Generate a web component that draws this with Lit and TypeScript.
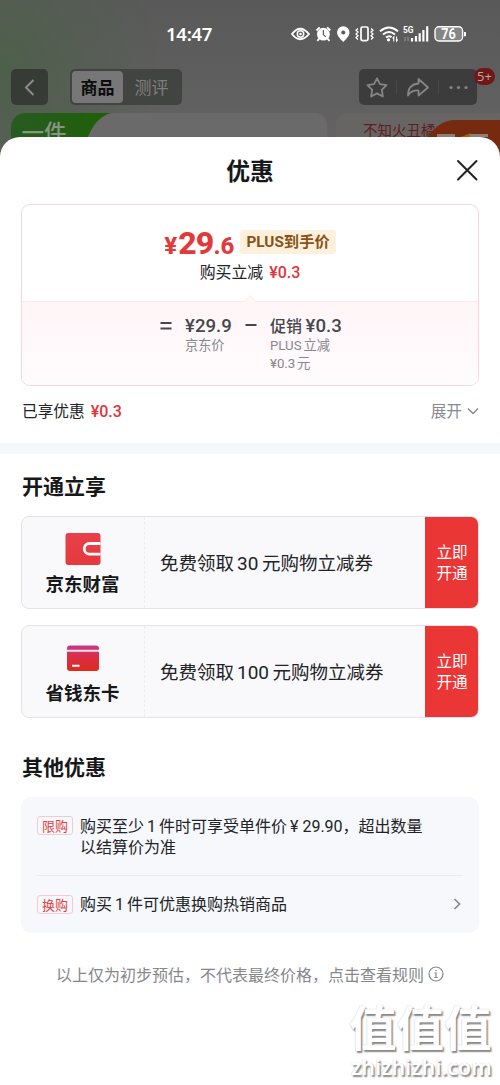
import { LitElement, html, css, svg } from "lit";
import { customElement } from "lit/decorators.js";

const font = css`"Noto Sans CJK SC", "Noto Sans", sans-serif`;

@customElement("status-bar")
class StatusBar extends LitElement {
  static styles = css`
    :host { display: flex; height: 26px; padding: 21px 33px 0 166px; justify-content: space-between; align-items: center; color: #fff; font-family: "Noto Sans", sans-serif; }
    .time { font-size: 18.500px; font-weight: 600; line-height: 26px; letter-spacing: -0.250px; }
    svg { display: block; }
    .net { font: 700 9px "Roboto", sans-serif; }
    .bat { font: 700 14px "Roboto", sans-serif; }
  `;
  render() {
    return html`
      <span class="time">14:47</span>
      <svg width="176" height="20" viewBox="291 24 176 20" fill="none" stroke="#fff">
        <path d="M292 34q8-10.500 17 0q-9 10.500-17 0z" stroke-width="1.900"/>
        <circle cx="300.500" cy="34" r="3.200" stroke-width="1.500"/><circle cx="300.500" cy="34" r="1.300" fill="#fff" stroke="none"/>
        <circle cx="323.400" cy="34.200" r="6.400" fill="#fff" stroke="none"/>
        <path d="M316.500 30.500l3.200-3.200M330.300 30.500l-3.200-3.200M319.300 38.500l-2 2.300M327.500 38.500l2 2.300" stroke-width="1.900"/>
        <path d="M323.400 30v4.600l2.300 2.300" stroke="#5b5b5b" stroke-width="1.200"/>
        <path d="M343.300 42c-3-3.200-6.200-6-6.200-9.500a6.200 6.200 0 0 1 12.400 0c0 3.500-3.200 6.300-6.200 9.500z" fill="#fff" stroke="none"/>
        <circle cx="343.300" cy="32.400" r="2" fill="#5b5b5b" stroke="none"/>
        <rect x="361" y="27" width="7" height="13.600" rx="1.500" stroke-width="1.700"/>
        <path d="M358 28.500l-2 1.800 2 1.800-2 1.900 2 1.800-2 1.800 2 1.800M371 28.500l2 1.800-2 1.800 2 1.900-2 1.800 2 1.800-2 1.800" stroke-width="1.300"/>
        <path d="M380 31.300q9-7.600 18 0M383 34.500q6-5 12 0M386 37.600q3-2.500 5.500-.5" stroke-width="2"/>
        <circle cx="388.500" cy="39.800" r="1.600" fill="#fff" stroke="none"/>
        <path d="M393.800 41.500v-4.500l-1.200 1.400M396.600 36.600v4.500l1.200-1.400" stroke-width="1.100"/>
        <text class="net" x="403" y="33.300" fill="#fff" stroke="none" textLength="10.500" lengthAdjust="spacingAndGlyphs">5G</text>
        <path d="M405 37v4M408 37v4" stroke="#999" stroke-width="1"/>
        <path d="M412 38v3.500M416 36v5.500M419.700 33.200v8.300M423.400 30v11.500M427.200 26.200v15.300" stroke-width="2.200"/>
        <rect x="435" y="26.800" width="27.600" height="14.200" rx="4" stroke-width="1.400" fill="#858585"/>
        <path d="M465 32v4.200" stroke-width="2"/>
        <text class="bat" x="441.300" y="39" fill="#fff" stroke="none" textLength="14.500" lengthAdjust="spacingAndGlyphs">76</text>
      </svg>
    `;
  }
}

@customElement("shop-backdrop")
class ShopBackdrop extends LitElement {
  static styles = css`
    :host { display: block; height: 160px; overflow: hidden; font-family: ${font};
      background: radial-gradient(ellipse 170px 180px at 0 70px, #4d6049 0, rgba(82,94,80,.65) 50%, rgba(91,91,91,0) 100%), linear-gradient(#595959, #616060 65%, #666364); }
    .nav { display: flex; align-items: center; height: 36px; padding: 22px 23px 0 11px; }
    .back { width: 37px; height: 36px; border-radius: 5px; background: #373b36; }
    .tabs { display: flex; box-sizing: border-box; width: 112px; height: 36px; margin-left: 22px; padding: 2px; border-radius: 5px; background: #424441; font-size: 17px; line-height: 31px; text-align: center; color: #7e7e7e; }
    .active { width: 51px; height: 32px; border-radius: 4px; background: #767776; color: #0c0c0c; font-weight: 700; }
    .idle { flex: 1; }
    .tools { position: relative; width: 118px; height: 36px; margin-left: auto; border-radius: 5px; background: #3c3c3c; }
    .badge { position: absolute; left: 115px; top: -1px; width: 21px; height: 17px; border-radius: 9px; background: #721616; color: #aaa; font: 13px/17px "Noto Sans", sans-serif; text-align: center; }
    svg { display: block; }
    .cards { display: flex; gap: 9px; padding: 8px 0 0 11px; }
    .left { width: 316px; height: 50px; border-radius: 14px 12px 0 0; background: #6b6a6a; overflow: hidden; }
    .right { position: relative; flex: 1; height: 50px; border-radius: 12px 0 0 0; background: #676464; color: #611c1c; font-size: 14.500px; line-height: 33px; padding-left: 27px; overflow: hidden; white-space: nowrap; }
    .promo { position: absolute; right: 0; top: 7px; }
    .deal { font-size: 22.500px; font-weight: 500; }
  `;
  render() {
    return html`
      <status-bar></status-bar>
      <div class="nav">
        <div class="back"><svg width="37" height="36" fill="none" stroke="#8b8b8b" stroke-width="2"><path d="M22.500 11l-7.500 7.500 7.500 7.500"/></svg></div>
        <div class="tabs"><div class="active">商品</div><div class="idle">测评</div></div>
        <div class="tools">
          <svg width="118" height="36" fill="none" stroke="#858585" stroke-width="1.800" stroke-linejoin="round">
            <path d="M18 9.300l3 5.900 6.500 1-4.700 4.700 1.100 6.600-5.900-3.100-5.900 3.100 1.100-6.600-4.700-4.700 6.500-1z"/>
            <path d="M59.500 10l9.500 8.500-9.500 8v-5c-5-.3-8 1.200-10.500 5 0-7.200 3.800-11.500 10.500-12z"/>
            <path d="M37.500 11v14M79.500 11v14" stroke="#484848" stroke-width="1"/>
            <g fill="#858585" stroke="none"><circle cx="92" cy="18.500" r="1.600"/><circle cx="99.500" cy="18.500" r="1.600"/><circle cx="107" cy="18.500" r="1.600"/></g>
          </svg>
          <span class="badge">5+</span>
        </div>
      </div>
      <div class="cards">
        <div class="left">
          <svg width="130" height="50"><defs><linearGradient id="leaf"><stop stop-color="#275b20"/><stop offset="1" stop-color="#206008"/></linearGradient></defs><path d="M0 0h101q-17 3-26 29v21H0z" fill="url(#leaf)"/><text class="deal" x="10.500" y="28" fill="#879485">一件</text></svg>
        </div>
        <div class="right">不知火丑橘
          <svg class="promo" width="72" height="45"><path d="M0 16Q12 0 27 0h45v45H0z" fill="#762b10"/><path d="M9 14h18v3H9zM40 14h20v3H40z" fill="#8c8179"/><path d="M30 18l13-5-3 6z" fill="#a06713"/></svg>
        </div>
      </div>
    `;
  }
}

const wallet = svg`<svg width="36" height="34" viewBox="0 0 36 34"><defs><linearGradient id="w" x2="0" y2="1"><stop stop-color="#e8404c"/><stop offset="1" stop-color="#e43a3c"/></linearGradient></defs><rect x=".5" y="1" width="35" height="32" rx="3" fill="url(#w)"/><path d="M35.500 11.500H24.500a5.300 5.300 0 0 0 0 10.600h11" fill="none" stroke="#fff" stroke-width="2.800"/></svg>`;
const bankCard = svg`<svg width="36" height="34" viewBox="0 0 36 34"><defs><linearGradient id="b" x2="0" y2="1"><stop stop-color="#c43b88"/><stop offset=".35" stop-color="#d92f50"/><stop offset="1" stop-color="#df2b1b"/></linearGradient></defs><rect x="2" y="4.500" width="32" height="25.500" rx="3" fill="url(#b)"/><path d="M2 9.800h32" stroke="#f6e3ef" stroke-width="2"/><path d="M7 24.800h7.500" stroke="#fff" stroke-width="2"/></svg>`;

@customElement("open-offer")
class OpenOffer extends LitElement {
  static properties = { name: {}, amount: {}, icon: { attribute: false } };
  declare name: string;
  declare amount: string;
  declare icon: unknown;
  static styles = css`
    :host { display: flex; box-sizing: border-box; height: 93px; border: 1px solid #e2e3e8; border-radius: 8px; background: #f9f9fc; overflow: hidden; }
    .brand { box-sizing: border-box; width: 123px; padding-top: 15px; border-right: 1px dashed #ecedf1; display: flex; flex-direction: column; align-items: center; font-size: 18.500px; line-height: 24px; font-weight: 700; color: #17181a; }
    .brand span { margin-left: -1px; }
    svg { display: block; margin-bottom: 5px; }
    .text { flex: 1; padding-left: 15px; font-size: 18.500px; line-height: 91px; white-space: nowrap; }
    .num { margin: 0 3.500px 0 3px; font: 19px/1 "Roboto", sans-serif; }
    .act { box-sizing: border-box; width: 54px; margin: -1px; padding-bottom: 1px; background: #eb3636; color: #fff; display: flex; flex-direction: column; justify-content: center; text-align: center; font-size: 15.600px; line-height: 21px; }
  `;
  render() {
    return html`
      <div class="brand">${this.icon}<span>${this.name}</span></div>
      <div class="text">免费领取<span class="num">${this.amount}</span>元购物立减券</div>
      <div class="act"><span>立即</span><span>开通</span></div>
    `;
  }
}

@customElement("app-root")
class AppRoot extends LitElement {
  static styles = css`
    :host { display: block; position: relative; width: 500px; height: 1085px; overflow: hidden; background: #fff; color: #222326; font-family: ${font}; }
    .sheet { position: relative; box-sizing: border-box; height: 948px; margin-top: -23px; border-radius: 20px 20px 0 0; background: #fff; }
    .head { display: grid; grid-template-columns: 1fr auto 1fr; align-items: center; height: 67px; padding: 0 21.500px; font-size: 23.800px; font-weight: 700; color: #17181a; }
    .head span { margin-top: -2px; }
    .close { justify-self: end; display: block; margin-top: -1px; }
    .num { font-family: "Roboto", sans-serif; line-height: 1; }
    .red { color: #e0353b; font-weight: 500; }
    .price-card { box-sizing: border-box; height: 182px; margin: 0 21px; border: 1px solid #f3d6de; border-radius: 9px; overflow: hidden; }
    .top { height: 97px; display: flex; flex-direction: column; align-items: center; }
    .final { display: flex; align-items: baseline; height: 54px; color: #e23a3b; font: 800 32px/76px "Roboto", sans-serif; }
    .yen { font-size: 24px; }
    .whole { letter-spacing: -.8px; margin-left: 1px; }
    .dec { font-size: 24px; }
    .plus { align-self: flex-start; margin: 25px 0 0 6px; height: 24px; padding: 0 6px; border-radius: 3px; background: #fdf0dd; color: #8b5217; font: 700 15.300px/24px "Roboto", ${font}; }
    .save { font-size: 15.900px; line-height: 26px; height: 26px; }
    .save .num { font-size: 16px; margin-left: 6px; }
    .calc { position: relative; height: 83px; background: linear-gradient(#fff5f7, #fffafc 60%, #fdfcfe); box-shadow: 0 -1px #fbe9ed; color: #45474c; display: grid; grid-template-columns: 24px 61px 24px auto; justify-content: start; padding-left: 139px; align-content: start; padding-top: 11px; }
    .notch { position: absolute; left: 221px; top: -8px; }
    .op { display: block; margin: 6px 0 0 -1px; }
    .big { font-size: 16px; line-height: 24px; height: 24px; font-weight: 500; white-space: nowrap; }
    .big .num { font-size: 18.600px; font-weight: 500; }
    .small { font: 13.200px/18px "Roboto", ${font}; color: #85878c; }
    .small i { display: inline-block; width: 2px; }
    .enjoyed { display: flex; align-items: center; justify-content: space-between; height: 56px; padding: 0 21px 0 22px; font-size: 15.700px; line-height: 24px; margin-top: -3px; }
    .enjoyed .num { font-size: 16px; margin-left: 6px; }
    .more { display: flex; align-items: center; gap: 5px; color: #888a8f; }
    .band { height: 11px; margin-top: 4px; background: #f6f7fb; }
    h2 { margin: 0; padding-left: 22px; height: 62px; font-size: 21px; line-height: 62px; font-weight: 700; color: #17181a; }
    .offers { display: grid; gap: 16px; padding: 0 21px; }
    .other { padding-top: 17px; }
    .rules { box-sizing: border-box; height: 136px; margin: 0 21px; padding: 18px 16px 0 15px; border-radius: 10px; background: #f6f8fc; font-size: 16px; line-height: 21px; }
    .rule { display: flex; gap: 8px; }
    .rule .body { flex: 1; white-space: nowrap; }
    .line { display: block; height: 21px; }
    .rule + .rule { align-items: center; border-top: 1px solid #e8eaef; margin-top: 18px; padding-top: 17px; }
    .tag { box-sizing: border-box; width: 36px; height: 19px; margin: 1px -1px 0 1px; border: 1px solid #f3cbd0; border-radius: 3px; text-align: center; font-size: 13px; line-height: 17px; color: #df3f43; }
    .gap { margin: 0 3px; }
    .end { margin-right: 0; }
    .note { display: flex; justify-content: center; align-items: center; gap: 4px; height: 82px; font-size: 16px; color: #85878b; white-space: nowrap; }
    .mark { position: absolute; left: 349px; top: 1001px; color: #fff; text-shadow: 1.500px 1.500px 1.500px #888, 0 0 1px #bbb; white-space: nowrap; }
    .zh { font-size: 47.500px; line-height: 50px; height: 50px; font-weight: 700; }
    .com { font: 600 21.500px/22px "Noto Sans", sans-serif; letter-spacing: -.05px; margin: 5px 0 0 2px; }
  `;
  render() {
    return html`
      <shop-backdrop></shop-backdrop>
      <main class="sheet">
        <div class="head"><i></i><span>优惠</span>
          <svg class="close" width="24" height="24" fill="none" stroke="#222" stroke-width="2" stroke-linecap="round"><path d="M3 3l18.500 18.500M21.500 3L3 21.500"/></svg>
        </div>
        <section class="price-card">
          <div class="top">
            <div class="final"><span class="yen">¥</span><span class="whole">29</span><span class="dec">.6</span><span class="plus">PLUS到手价</span></div>
            <div class="save">购买立减<span class="num red">¥0.3</span></div>
          </div>
          <div class="calc">
            <svg class="notch" width="14" height="9"><path d="M0 8.500l7-7 7 7" fill="#fff5f7" stroke="#fbe9ed"/></svg>
            <svg class="op" width="12" height="14" stroke="#45474c" stroke-width="1.900"><path d="M.5 4h11M.5 9.500h11"/></svg>
            <div><div class="big"><span class="num">¥29.9</span></div><div class="small">京东价</div></div>
            <svg class="op" width="12" height="14" stroke="#45474c" stroke-width="1.900"><path d="M.5 6h11"/></svg>
            <div><div class="big">促销 <span class="num">¥0.3</span></div><div class="small">PLUS<i></i>立减</div><div class="small">¥0.3<i></i>元</div></div>
          </div>
        </section>
        <div class="enjoyed"><span>已享优惠<span class="num red">¥0.3</span></span>
          <span class="more">展开<svg width="12" height="8" fill="none" stroke="#888a8f" stroke-width="1.500"><path d="M1 1.500l5 5 5-5"/></svg></span>
        </div>
        <div class="band"></div>
        <h2>开通立享</h2>
        <div class="offers">
          <open-offer name="京东财富" amount="30" .icon=${wallet}></open-offer>
          <open-offer name="省钱东卡" amount="100" .icon=${bankCard}></open-offer>
        </div>
        <h2 class="other">其他优惠</h2>
        <section class="rules">
          <div class="rule"><span class="tag">限购</span><div class="body"><span class="line">购买至少<span class="num gap">1</span>件时可享受单件价<span class="num gap end">¥ 29.90</span>，超出数量</span><span class="line">以结算价为准</span></div></div>
          <div class="rule"><span class="tag">换购</span><div class="body"><span class="line">购买<span class="num gap">1</span>件可优惠换购热销商品</span></div>
            <svg width="10" height="14" fill="none" stroke="#888a8f" stroke-width="1.700"><path d="M1.500 2l5 5-5 5"/></svg></div>
        </section>
        <div class="note">以上仅为初步预估，不代表最终价格，点击查看规则
          <svg width="16" height="16" fill="none" stroke="#85878b"><circle cx="8" cy="8" r="7" stroke-width="1.200"/><path d="M6.500 7H8v4.500M6.300 11.500h3.500M7.400 4.700h1.300" stroke-width="1.200"/></svg>
        </div>
      </main>
      <div class="mark"><div class="zh">值值值</div><div class="com">zhizhizhi.com</div></div>
    `;
  }
}
